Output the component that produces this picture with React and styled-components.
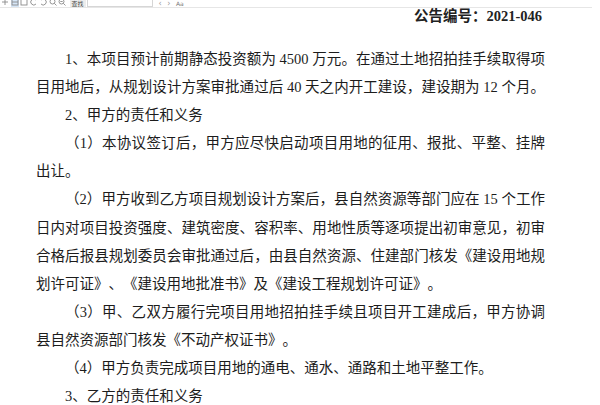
import styled, { createGlobalStyle } from "styled-components";

const GlobalStyle = createGlobalStyle`
  html, body {
    margin: 0;
    padding: 0;
    background: #ffffff;
  }
  body {
    width: 600px;
    height: 405px;
    overflow: hidden;
  }
`;

const lines = [
  { text: "1、本项目预计前期静态投资额为 4500 万元。在通过土地招拍挂手续取得项", indent: true, full: true },
  { text: "目用地后，从规划设计方案审批通过后 40 天之内开工建设，建设期为 12 个月。", full: true },
  { text: "2、甲方的责任和义务", indent: true },
  { text: "（1）本协议签订后，甲方应尽快启动项目用地的征用、报批、平整、挂牌", indent: true, full: true },
  { text: "出让。" },
  { text: "（2）甲方收到乙方项目规划设计方案后，县自然资源等部门应在 15 个工作", indent: true, full: true },
  { text: "日内对项目投资强度、建筑密度、容积率、用地性质等逐项提出初审意见，初审", full: true },
  { text: "合格后报县规划委员会审批通过后，由县自然资源、住建部门核发《建设用地规", full: true },
  { text: "划许可证》、《建设用地批准书》及《建设工程规划许可证》。" },
  { text: "（3）甲、乙双方履行完项目用地招拍挂手续且项目开工建成后，甲方协调", indent: true, full: true },
  { text: "县自然资源部门核发《不动产权证书》。" },
  { text: "（4）甲方负责完成项目用地的通电、通水、通路和土地平整工作。", indent: true },
  { text: "3、乙方的责任和义务", indent: true },
];

const Icon = ({ children }) => (
  <svg width="8" height="8" viewBox="0 0 8 8" fill="none" stroke="#8a8a8a" strokeWidth="0.9">
    {children}
  </svg>
);

export default function App() {
  return (
    <Page>
      <GlobalStyle />
      <Toolbar>
        <ToolIcon><Icon><path d="M4 0v6M1 3h6" /></Icon></ToolIcon>
        <ToolIcon $active><Icon><rect x="1" y="0" width="6" height="6" /><path d="M1 3h6" /></Icon></ToolIcon>
        <ToolIcon><Icon><rect x="1" y="0" width="6" height="6" /></Icon></ToolIcon>
        <ToolIcon><Icon><path d="M6 1A3 3 0 1 0 6 5" /></Icon></ToolIcon>
        <ToolIcon><Icon><path d="M2 1A3 3 0 1 1 2 5" /></Icon></ToolIcon>
        <ToolIcon><Icon><circle cx="3.5" cy="2.5" r="2.5" /><path d="M5.3 4.3L7.5 6.5" /></Icon></ToolIcon>
        <ToolIcon><Icon><circle cx="3.5" cy="2.5" r="2.5" /><path d="M5.3 4.3L7.5 6.5M2.3 2.5h2.4" /></Icon></ToolIcon>
        <SearchLabel>查找</SearchLabel>
        <SearchInput />
        <Arrow>‹</Arrow>
        <Arrow>›</Arrow>
        <CaseToggle>Aa</CaseToggle>
      </Toolbar>
      <Header>公告编号：2021-046</Header>
      <Body>
        {lines.map((line, i) => (
          <Line key={i} $indent={line.indent} $full={line.full}>
            {line.text}
          </Line>
        ))}
      </Body>
    </Page>
  );
}

const Page = styled.div`
  width: 600px;
  height: 405px;
  overflow: hidden;
  background: #ffffff;
  font-family: "Liberation Serif", "Noto Sans CJK SC", serif;
  color: #1c1c1c;
  text-spacing-trim: space-all;
`;

const Toolbar = styled.div`
  height: 7px;
  display: flex;
  align-items: flex-end;
  gap: 1.5px;
  padding-left: 1px;
  margin-right: 8px;
  border-bottom: 1px solid #e6e6e6;
  overflow: hidden;
`;

const ToolIcon = styled.div`
  width: 8px;
  height: 7px;
  display: flex;
  align-items: flex-end;
  justify-content: center;
  background: ${({ $active }) => ($active ? "#d6e6f7" : "transparent")};
`;

const SearchLabel = styled.div`
  margin-left: 2px;
  height: 7px;
  padding: 0 2px;
  display: flex;
  align-items: flex-end;
  font-family: "Noto Sans CJK SC", sans-serif;
  font-size: 6px;
  line-height: 7px;
  color: #444;
  background: #ececec;
`;

const SearchInput = styled.div`
  width: 64px;
  height: 6px;
  border: 1px solid #d6d6d6;
  border-top: none;
  background: #fff;
`;

const Arrow = styled.div`
  margin-left: 4px;
  font-family: "DejaVu Sans", sans-serif;
  font-size: 8px;
  line-height: 7px;
  color: #9a9a9a;
`;

const CaseToggle = styled.div`
  margin-left: 4px;
  font-family: "DejaVu Sans", sans-serif;
  font-size: 6px;
  line-height: 7px;
  color: #777;
`;

const Header = styled.div`
  height: 17px;
  line-height: 17px;
  padding-right: 58px;
  text-align: right;
  font-size: 14.5px;
  font-weight: bold;
  color: #222;
`;

const Body = styled.div`
  margin-top: 20px;
  padding-left: 36px;
  width: 509px;
  font-size: 14.5px;
  line-height: 28.1px;
`;

const Line = styled.div`
  white-space: ${({ $full }) => ($full ? "normal" : "nowrap")};
  text-indent: ${({ $indent }) => ($indent ? "2em" : "0")};
  text-align: ${({ $full }) => ($full ? "justify" : "left")};
  text-align-last: ${({ $full }) => ($full ? "justify" : "left")};
`;
